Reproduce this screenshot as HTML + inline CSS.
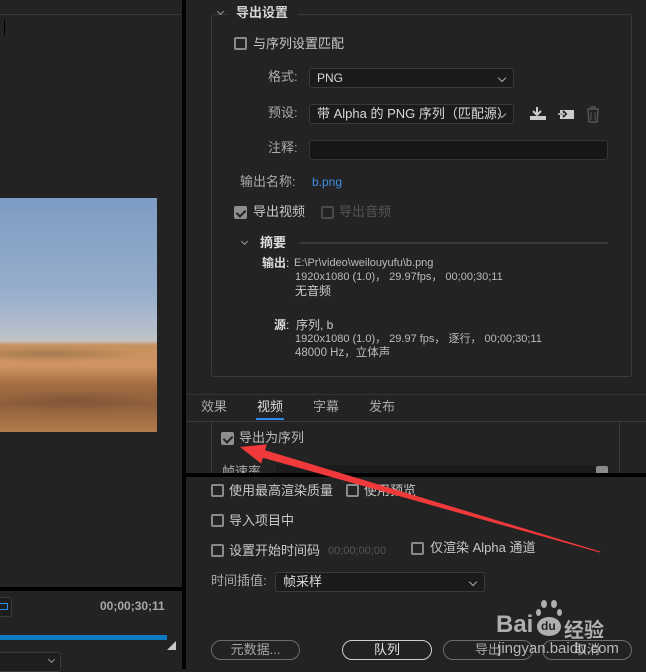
<!DOCTYPE html>
<html><head><meta charset="utf-8"><style>
*{margin:0;padding:0;box-sizing:border-box}
body{width:646px;height:669px;background:#232323;position:relative;overflow:hidden;font-family:"Liberation Sans","Noto Sans CJK SC",sans-serif;font-size:12px;color:#c8c8c8}
.a{position:absolute;white-space:nowrap}
.t{position:absolute;white-space:nowrap;line-height:14px;transform:translateY(-7px)}
.cb{position:absolute;width:13px;height:13px;border:2px solid #8a8a8a;border-radius:2px}
.cb.on{background:#8f8f8f;border-color:#8f8f8f}
.cb.on::after{content:"";position:absolute;left:2px;top:0px;width:4px;height:7px;border:solid #222;border-width:0 2px 2px 0;transform:rotate(45deg)}
.dd{position:absolute;background:#1b1b1b;border:1px solid #3a3a3a;border-radius:3px;height:20px;line-height:18px;padding-left:7px;color:#d8d8d8;overflow:hidden}
.dd::after{content:"";position:absolute;right:8px;top:6px;width:5px;height:5px;border:solid #aaa;border-width:0 1px 1px 0;transform:rotate(45deg)}
.btn{position:absolute;height:20px;border:1px solid #6e6e6e;border-radius:10px;text-align:center;line-height:18px;color:#a8a8a8;font-size:13px}
.chev{position:absolute;width:5px;height:5px;border:solid #999;border-width:0 1px 1px 0;transform:rotate(45deg)}
</style></head><body>
<!-- left panel -->
<div class="a" style="left:0;top:14px;width:181px;height:1px;background:#3a3a3a"></div>
<div class="a" style="left:4px;top:20px;width:1px;height:15px;background:#000"></div>
<div class="a" style="left:0;top:198px;width:157px;height:234px;background:linear-gradient(180deg,#7d9cc4 0%,#97aecb 40%,#b8c1cc 58%,#c4c2bf 61%,#c6915e 63%,#cf9462 72%,#a26c43 80%,#8f5f3c 88%,#b07a4c 100%)"></div>
<div class="a" style="left:0;top:345px;width:157px;height:18px;background:radial-gradient(ellipse at 30% 50%,#8b6a45 0%,transparent 60%);opacity:.6"></div>
<div class="a" style="left:0;top:390px;width:150px;height:22px;background:radial-gradient(ellipse at 50% 50%,#7a5235 0%,transparent 70%);opacity:.7"></div>
<div class="a" style="left:182px;top:0;width:4px;height:669px;background:#000"></div>
<div class="a" style="left:0;top:587px;width:182px;height:4px;background:#000"></div>
<div class="a" style="left:-4px;top:597px;width:16px;height:20px;border:1px solid #3a3a3a;border-radius:3px;background:#1e1e1e"></div>
<div class="a" style="left:0;top:603px;width:8px;height:7px;border:1.5px solid #2d8ceb;border-left:none"></div>
<div class="a" style="left:100px;top:599px;font-weight:bold;color:#a9a9a9;font-size:12px">00;00;30;11</div>
<div class="a" style="left:0;top:635px;width:167px;height:5px;background:#0a7bc1"></div>
<div class="a" style="left:167px;top:641px;width:0;height:0;border-left:9px solid transparent;border-bottom:9px solid #c8c8c8"></div>
<div class="a" style="left:-4px;top:652px;width:65px;height:20px;border:1px solid #3a3a3a;border-radius:3px;background:#1e1e1e"></div>
<div class="chev" style="left:49px;top:657px"></div>

<!-- right top -->
<div class="a" style="left:211px;top:14px;width:421px;height:363px;border:1px solid #3a3a3a;border-radius:3px"></div>
<div class="a" style="left:228px;top:5px;width:70px;height:16px;background:#232323"></div>
<div class="chev" style="left:218px;top:9px"></div>
<div class="t" style="left:236px;top:13px;font-weight:bold;font-size:13px;color:#d5d5d5">导出设置</div>
<div class="cb" style="left:234px;top:37px"></div>
<div class="t" style="left:253px;top:44px;font-size:13px">与序列设置匹配</div>
<div class="t" style="left:268px;top:77px;font-size:13px;color:#aaa">格式:</div>
<div class="dd" style="left:309px;top:68px;width:205px">PNG</div>
<div class="t" style="left:268px;top:113px;font-size:13px;color:#aaa">预设:</div>
<div class="dd" style="left:309px;top:104px;width:205px;font-size:13px">带 Alpha 的 PNG 序列（匹配源）</div>
<svg class="a" style="left:529px;top:104px" width="75" height="20" viewBox="0 0 75 20">
<path d="M8 3v7M4 7l4 4 4-4" stroke="#ccc" stroke-width="2" fill="none"/><rect x="1" y="12" width="16" height="4" fill="#ccc"/>
<rect x="31" y="6" width="14" height="9" fill="#ccc"/><path d="M29 10h8M34 7l3 3-3 3" stroke="#232323" stroke-width="2" fill="none"/><path d="M29 10h7" stroke="#ccc" stroke-width="1.5"/>
<path d="M58 5h12M62 5v-2h4v2M59 6l1 12h8l1-12" stroke="#555" stroke-width="1.5" fill="none"/><path d="M62 8v8M66 8v8" stroke="#555"/>
</svg>
<div class="t" style="left:268px;top:148px;font-size:13px;color:#aaa">注释:</div>
<div class="a" style="left:309px;top:140px;width:299px;height:20px;background:#171717;border:1px solid #353535;border-radius:3px"></div>
<div class="t" style="left:240px;top:182px;font-size:13px;color:#aaa">输出名称:</div>
<div class="t" style="left:312px;top:182px;color:#3d8ee0">b.png</div>
<div class="cb on" style="left:234px;top:206px"></div>
<div class="t" style="left:253px;top:212px;font-size:13px">导出视频</div>
<div class="cb" style="left:321px;top:206px;border-color:#4a4a4a"></div>
<div class="t" style="left:339px;top:212px;font-size:13px;color:#555">导出音频</div>
<div class="chev" style="left:242px;top:239px"></div>
<div class="t" style="left:260px;top:243px;font-weight:bold;font-size:13px;color:#ddd">摘要</div>
<div class="a" style="left:300px;top:242px;width:308px;height:2px;background:#3a3a3a"></div>
<div class="t" style="left:262px;top:263px;font-weight:bold;font-size:12px;color:#ddd">输出<span style="font-weight:normal">:</span></div>
<div class="t" style="left:294px;top:263px;font-size:11px;color:#bbb">E:\Pr\video\weilouyufu\b.png</div>
<div class="t" style="left:295px;top:277px;font-size:11px;color:#bbb">1920x1080 (1.0)， 29.97fps， 00;00;30;11</div>
<div class="t" style="left:295px;top:291px;font-size:12px;color:#ccc">无音频</div>
<div class="t" style="left:274px;top:325px;font-weight:bold;font-size:12px;color:#ddd">源<span style="font-weight:normal">:</span></div>
<div class="t" style="left:296px;top:325px;font-size:12px;color:#ccc">序列, b</div>
<div class="t" style="left:295px;top:339px;font-size:11px;color:#bbb">1920x1080 (1.0)， 29.97 fps， 逐行， 00;00;30;11</div>
<div class="t" style="left:295px;top:353px;font-size:11.5px;color:#bbb">48000 Hz，立体声</div>
<!-- tabs -->
<div class="a" style="left:186px;top:394px;width:460px;height:1px;background:#333"></div>
<div class="t" style="left:201px;top:407px;font-size:13px;color:#aaa">效果</div>
<div class="t" style="left:257px;top:407px;font-size:13px;color:#ddd">视频</div>
<div class="t" style="left:313px;top:407px;font-size:13px;color:#aaa">字幕</div>
<div class="t" style="left:369px;top:407px;font-size:13px;color:#aaa">发布</div>
<div class="a" style="left:256px;top:418px;width:28px;height:2px;background:#2d8ceb"></div>
<div class="a" style="left:186px;top:421px;width:460px;height:1px;background:#3a3a3a"></div>
<div class="a" style="left:211px;top:422px;width:1px;height:52px;background:#3a3a3a"></div>
<div class="a" style="left:619px;top:422px;width:1px;height:52px;background:#3a3a3a"></div>
<div class="cb on" style="left:221px;top:432px"></div>
<div class="t" style="left:239px;top:438px;font-size:13px;color:#bbb">导出为序列</div>
<div class="t" style="left:222px;top:472px;font-size:13px;color:#aaa">帧速率</div>
<div class="a" style="left:276px;top:465px;width:322px;height:10px;background:#1b1b1b"></div>
<div class="a" style="left:596px;top:466px;width:12px;height:10px;background:#8a8a8a;border-radius:2px"></div>
<div class="a" style="left:182px;top:473px;width:464px;height:4px;background:#000"></div>
<!-- bottom -->
<div class="cb" style="left:211px;top:484px"></div>
<div class="t" style="left:229px;top:491px;font-size:13px">使用最高渲染质量</div>
<div class="cb" style="left:346px;top:484px"></div>
<div class="t" style="left:364px;top:491px;font-size:13px">使用预览</div>
<div class="cb" style="left:211px;top:514px"></div>
<div class="t" style="left:229px;top:521px;font-size:13px">导入项目中</div>
<div class="cb" style="left:211px;top:544px"></div>
<div class="t" style="left:229px;top:551px;font-size:13px">设置开始时间码</div>
<div class="t" style="left:328px;top:551px;font-size:11px;color:#555">00;00;00;00</div>
<div class="cb" style="left:411px;top:542px"></div>
<div class="t" style="left:430px;top:548px;font-size:13px">仅渲染 Alpha 通道</div>
<div class="t" style="left:211px;top:581px;font-size:13px;color:#aaa">时间插值:</div>
<div class="dd" style="left:275px;top:572px;width:210px;font-size:13px">帧采样</div>
<div class="btn" style="left:211px;top:640px;width:89px">元数据...</div>
<div class="btn" style="left:342px;top:640px;width:90px;border-color:#cfcfcf;color:#e6e6e6">队列</div>
<div class="btn" style="left:443px;top:640px;width:90px">导出</div>
<div class="btn" style="left:542px;top:640px;width:90px">取消</div>
<!-- watermark -->
<div class="a" style="left:496px;top:611px;font-size:24px;font-weight:bold;color:rgba(200,200,200,.85)">Bai</div>
<div class="a" style="left:537px;top:617px;width:24px;height:19px;border-radius:50%;background:rgba(200,200,200,.85)"></div>
<div class="a" style="left:541px;top:619px;font-size:12px;font-weight:bold;color:#232323">du</div>
<div class="a" style="left:541px;top:600px;width:6px;height:8px;border-radius:50%;background:rgba(200,200,200,.85)"></div>
<div class="a" style="left:551px;top:600px;width:6px;height:8px;border-radius:50%;background:rgba(200,200,200,.85)"></div>
<div class="a" style="left:536px;top:609px;width:5px;height:7px;border-radius:50%;background:rgba(200,200,200,.85)"></div>
<div class="a" style="left:557px;top:609px;width:5px;height:7px;border-radius:50%;background:rgba(200,200,200,.85)"></div>
<div class="a" style="left:564px;top:614px;font-size:20px;font-weight:bold;color:rgba(200,200,200,.85)">经验</div>
<div class="a" style="left:498px;top:640px;font-size:15px;color:rgba(210,210,210,.85)">jingyan.baidu.com</div>
<!-- arrow -->
<svg class="a" style="left:0;top:0" width="646" height="669"><polygon points="240,447 266.8,444.4 265.1,450.2 600.1,551.5 599.9,552.5 262.9,457.8 261.2,463.6" fill="#f0393a"/></svg>
</body></html>
